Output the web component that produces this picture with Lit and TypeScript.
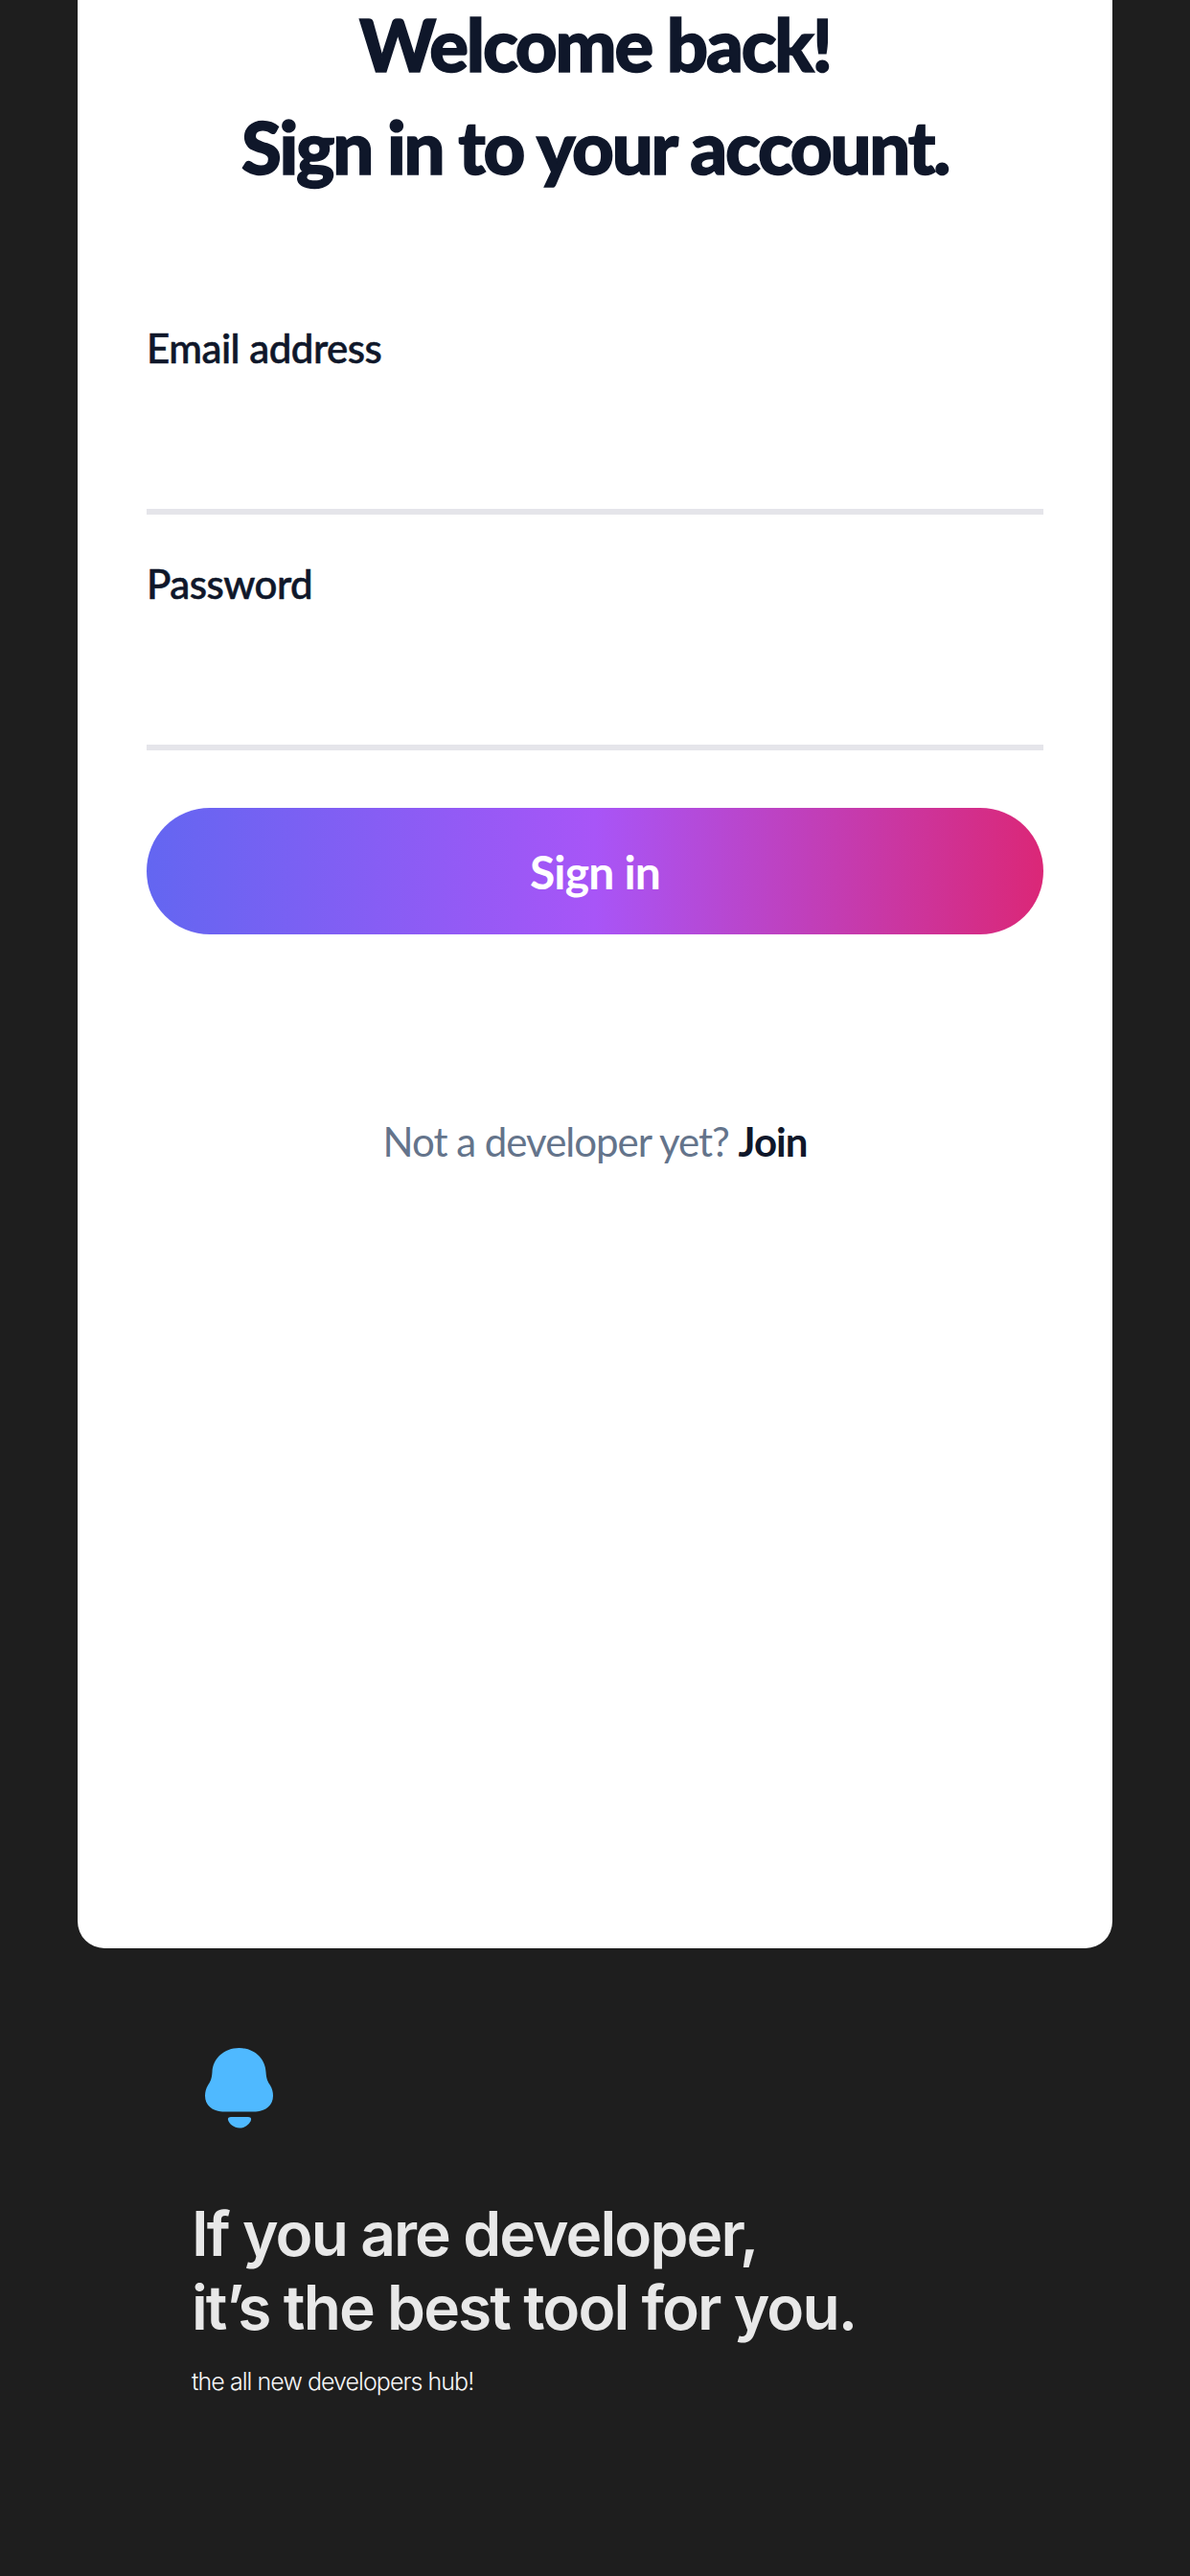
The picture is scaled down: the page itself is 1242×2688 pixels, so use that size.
import {LitElement, html, css} from 'lit';
import {customElement} from 'lit/decorators.js';

@customElement('app-root')
export class AppRoot extends LitElement {
  static styles = css`
    :host {
      display: block;
      height: 2688px;
      overflow: hidden;
      background: #1e1e1e;
      font-family: Lato, 'Noto Sans', sans-serif;
    }

    .card {
      box-sizing: border-box;
      width: 1080px;
      height: 2033px;
      margin: 0 auto;
      padding: 0 72px;
      background: #fff;
      border-radius: 0 0 28px 28px;
      overflow: hidden;
    }

    .title {
      display: flex;
      flex-direction: column;
      gap: 19px;
      margin: 0;
      padding-top: 2px;
      font-size: 76px;
      line-height: 88px;
      font-weight: 900;
      letter-spacing: -2.2px;
      text-align: center;
      color: #0f172a;
      -webkit-text-stroke: 1.5px #0f172a;
    }

    form {
      display: flex;
      flex-direction: column;
      margin-top: 138px;
    }

    label {
      display: block;
      font-size: 42px;
      line-height: 56px;
      font-weight: 500;
      letter-spacing: -0.5px;
      color: #0f172a;
      -webkit-text-stroke: 0.6px #0f172a;
    }

    .field + .field {
      margin-top: 44px;
    }

    input {
      display: block;
      box-sizing: border-box;
      width: 100%;
      height: 146px;
      padding: 0;
      border: 0;
      border-bottom: 6px solid #e5e5ea;
      outline: none;
      background: transparent;
    }

    button {
      height: 132px;
      margin-top: 60px;
      border: 0;
      border-radius: 66px;
      background: linear-gradient(90deg, #6366f1, #a855f7 50%, #db2777);
      color: #fff;
      font-family: inherit;
      font-size: 48px;
      font-weight: 700;
      letter-spacing: -0.8px;
    }

    .join {
      margin: 186px 0 0;
      font-size: 42px;
      line-height: 60px;
      font-weight: 400;
      letter-spacing: -1px;
      text-align: center;
      color: #64748b;
    }

    .join a {
      font-weight: 700;
      color: #0f172a;
    }

    .promo {
      padding: 104px 0 0 200px;
      font-family: Inter, sans-serif;
    }

    .bell {
      display: block;
      width: 71px;
      height: 84px;
      margin-left: 14px;
      fill: #4fb9ff;
    }

    h2 {
      margin: 71px 0 0;
      font-size: 64px;
      line-height: 77px;
      font-weight: 600;
      letter-spacing: -1.9px;
      color: #e8e8e8;
    }

    .sub {
      margin: 22px 0 0;
      font-size: 25px;
      line-height: 34px;
      font-weight: 300;
      letter-spacing: -0.95px;
      color: #f5f5f5;
    }
  `;

  render() {
    return html`
      <div class="card">
        <h1 class="title">
          <span>Welcome back!</span>
          <span>Sign in to your account.</span>
        </h1>
        <form>
          <div class="field">
            <label for="email">Email address</label>
            <input id="email" type="email" />
          </div>
          <div class="field">
            <label for="password">Password</label>
            <input id="password" type="password" />
          </div>
          <button type="button">Sign in</button>
        </form>
        <p class="join">Not a developer yet? <a>Join</a></p>
      </div>
      <div class="promo">
        <svg class="bell" viewBox="0 0 71 84">
          <path
            d="M35.5 0C51 0 63 11 63.5 25C64 33 66 36 68 39C70 42 71 46 71 50C71 60 63 66 53 66.5L18 66.5C8 66 0 60 0 50C0 46 1 42 3 39C5 36 7 33 7.5 25C8 11 20 0 35.5 0Z"
          ></path>
          <path
            d="M27 72L45 72C47 72 48.5 73 48 75C47 79 42 83.5 36 83.5C30 83.5 25 79 24 75C23.5 73 25 72 27 72Z"
          ></path>
        </svg>
        <h2>If you are developer,<br />it’s the best tool for you.</h2>
        <p class="sub">the all new developers hub!</p>
      </div>
    `;
  }
}
